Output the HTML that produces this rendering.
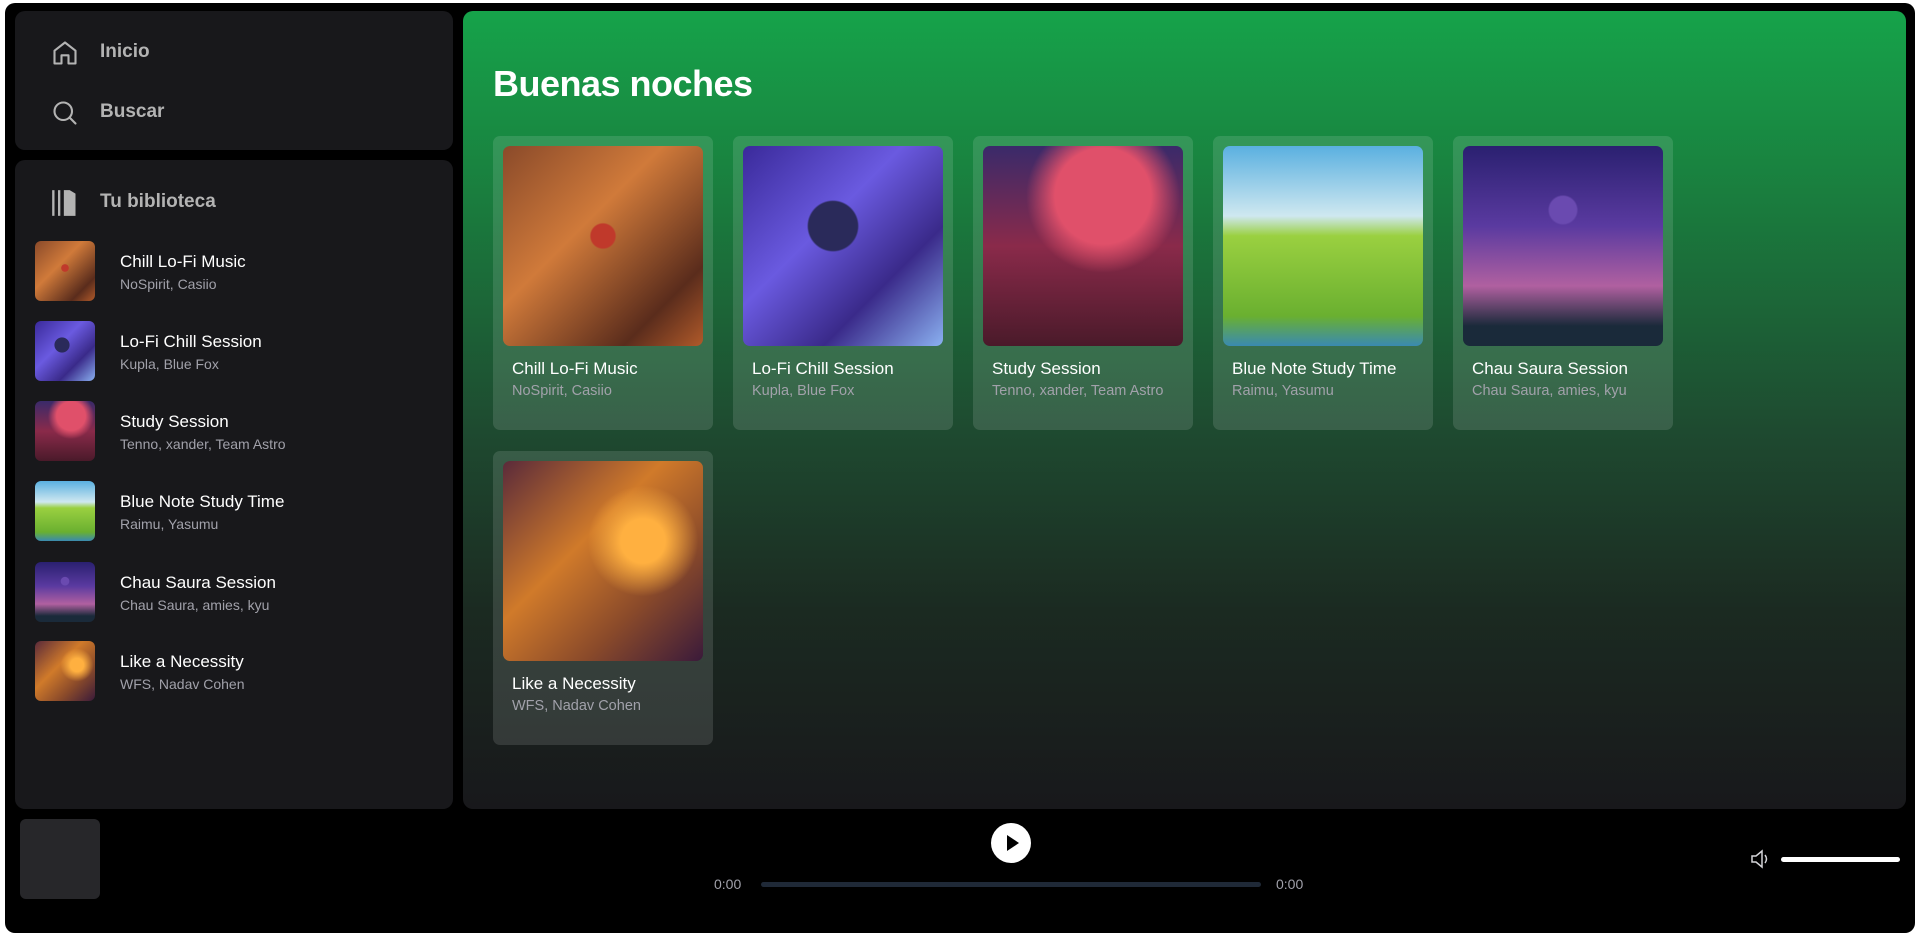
<!DOCTYPE html>
<html><head><meta charset="utf-8"><style>
*{margin:0;padding:0;box-sizing:border-box}
html,body{width:1919px;height:926px;overflow:hidden;background:#fff;font-family:"Liberation Sans",sans-serif}
.app{position:absolute;left:5px;top:3px;width:1910px;height:930px;background:#000;border-radius:10px}
.panel{position:absolute;background:#18181b;border-radius:10px}
.nav{display:flex;align-items:center;position:absolute;left:36px;color:#b3b3b3;font-weight:bold;font-size:19px}
.nav svg{position:absolute;left:0}
.nav span{position:absolute;left:49px;white-space:nowrap}
.item{position:absolute;left:20px;height:60px;width:400px}
.item .art{position:absolute;left:0;top:0;width:60px;height:60px;border-radius:6px}
.item .t{position:absolute;left:85px;top:11px;color:#fff;font-size:17px;white-space:nowrap}
.item .s{position:absolute;left:85px;top:35px;color:#a1a1aa;font-size:14px;white-space:nowrap}
.main{position:absolute;left:463px;top:11px;width:1443px;height:798px;border-radius:10px;background:linear-gradient(180deg,#16a34a 0px,#1a7a3d 200px,#1e4a30 420px,#1b2a21 600px,#18181b 798px)}
.card{position:absolute;width:220px;height:294px;background:rgba(255,255,255,0.12);border-radius:7px}
.card .art{position:absolute;left:10px;top:10px;width:200px;height:200px;border-radius:7px}
.card .t{position:absolute;left:19px;top:223px;color:#fff;font-size:17px;white-space:nowrap}
.card .s{position:absolute;left:19px;top:247px;color:#a1a1aa;font-size:14.5px;white-space:nowrap}
.a1{background:radial-gradient(circle at 50% 45%,#c0392b 0 8%,transparent 9%),linear-gradient(135deg,#8a4a2a,#d07a3a 40%,#5a2c1c 80%,#b05a2a)}
.a2{background:radial-gradient(circle at 45% 40%,#2a2a5a 0 15%,transparent 16%),linear-gradient(135deg,#3a2a9a,#6a5ae0 40%,#3a2a8a 70%,#8ab0f0)}
.a3{background:radial-gradient(circle at 60% 25%,#e0506a 0 25%,transparent 40%),linear-gradient(180deg,#3a2a6a,#8a2a4a 50%,#4a1a2a)}
.a4{background:linear-gradient(180deg,#5ab0e0 0,#cfe8f0 35%,#9ad040 45%,#6ab030 85%,#3a8ab0 100%)}
.a5{background:radial-gradient(circle at 50% 32%,#6a4ab0 0 8%,transparent 9%),linear-gradient(180deg,#2a2070,#5a3aa0 40%,#b060a0 70%,#1a2a3a 90%)}
.a6{background:radial-gradient(circle at 70% 40%,#ffb040 0 12%,transparent 30%),linear-gradient(135deg,#5a2a3a,#d07a2a 40%,#8a4a2a 70%,#3a1a3a)}
</style></head><body>
<div class="app">
 <div class="panel" style="left:10px;top:8px;width:438px;height:139px">
  <div class="nav" style="top:42px"><svg width="28" height="28" viewBox="0 0 24 24" fill="none" stroke="#b3b3b3" stroke-width="1.8" stroke-linejoin="round" style="top:-14px"><path d="M3 21V10l9-7 9 7v11h-6v-7H9v7z"/></svg><span style="top:-12px">Inicio</span></div>
  <div class="nav" style="top:102px"><svg width="28" height="28" viewBox="0 0 24 24" fill="none" stroke="#b3b3b3" stroke-width="1.8" stroke-linecap="round" style="top:-14px"><circle cx="10.5" cy="10.5" r="7.5"/><path d="M16 16l5 5"/></svg><span style="top:-12px">Buscar</span></div>
 </div>
 <div class="panel" style="left:10px;top:157px;width:438px;height:649px">
  <div class="nav" style="top:43px"><svg width="28" height="28" viewBox="0 0 24 24" fill="#b3b3b3" style="top:-14px"><rect x="1" y="1" width="2" height="22"/><rect x="6" y="1" width="2" height="22"/><path d="M11 1h5l5 3v19H11z"/></svg><span style="top:-12px">Tu biblioteca</span></div>
  <div class="item" style="top:81px"><div class="art a1"></div><div class="t">Chill Lo-Fi Music</div><div class="s">NoSpirit, Casiio</div></div>
  <div class="item" style="top:161px"><div class="art a2"></div><div class="t">Lo-Fi Chill Session</div><div class="s">Kupla, Blue Fox</div></div>
  <div class="item" style="top:241px"><div class="art a3"></div><div class="t">Study Session</div><div class="s">Tenno, xander, Team Astro</div></div>
  <div class="item" style="top:321px"><div class="art a4"></div><div class="t">Blue Note Study Time</div><div class="s">Raimu, Yasumu</div></div>
  <div class="item" style="top:402px"><div class="art a5"></div><div class="t">Chau Saura Session</div><div class="s">Chau Saura, amies, kyu</div></div>
  <div class="item" style="top:481px"><div class="art a6"></div><div class="t">Like a Necessity</div><div class="s">WFS, Nadav Cohen</div></div>
 </div>
</div>
<div class="main">
 <div style="position:absolute;left:30px;top:52px;color:#fff;font-size:36px;font-weight:bold;letter-spacing:-0.5px">Buenas noches</div>
 <div class="card" style="left:30px;top:125px"><div class="art a1"></div><div class="t">Chill Lo-Fi Music</div><div class="s">NoSpirit, Casiio</div></div>
 <div class="card" style="left:270px;top:125px"><div class="art a2"></div><div class="t">Lo-Fi Chill Session</div><div class="s">Kupla, Blue Fox</div></div>
 <div class="card" style="left:510px;top:125px"><div class="art a3"></div><div class="t">Study Session</div><div class="s">Tenno, xander, Team Astro</div></div>
 <div class="card" style="left:750px;top:125px"><div class="art a4"></div><div class="t">Blue Note Study Time</div><div class="s">Raimu, Yasumu</div></div>
 <div class="card" style="left:990px;top:125px"><div class="art a5"></div><div class="t">Chau Saura Session</div><div class="s">Chau Saura, amies, kyu</div></div>
 <div class="card" style="left:30px;top:440px"><div class="art a6"></div><div class="t">Like a Necessity</div><div class="s">WFS, Nadav Cohen</div></div>
</div>
<div style="position:absolute;left:20px;top:819px;width:80px;height:80px;background:#27272a;border-radius:6px"></div>
<div style="position:absolute;left:991px;top:823px;width:40px;height:40px;border-radius:50%;background:#fff"><svg width="40" height="40" viewBox="0 0 40 40"><path d="M16 12l12 8-12 8z" fill="#000"/></svg></div>
<div style="position:absolute;left:714px;top:876px;color:#a1a1aa;font-size:14px">0:00</div>
<div style="position:absolute;left:761px;top:882px;width:500px;height:5px;background:#1f2937;border-radius:3px"></div>
<div style="position:absolute;left:1276px;top:876px;color:#a1a1aa;font-size:14px">0:00</div>
<svg style="position:absolute;left:1750px;top:849px" width="22" height="20" viewBox="0 0 22 20" fill="none" stroke="#d4d4d8" stroke-width="1.5"><path d="M2 7h4l6-5v16l-6-5H2z"/><path d="M15 6q3 4 0 8"/></svg>
<div style="position:absolute;left:1781px;top:857px;width:119px;height:5px;background:#fff;border-radius:3px"></div>
</body></html>
